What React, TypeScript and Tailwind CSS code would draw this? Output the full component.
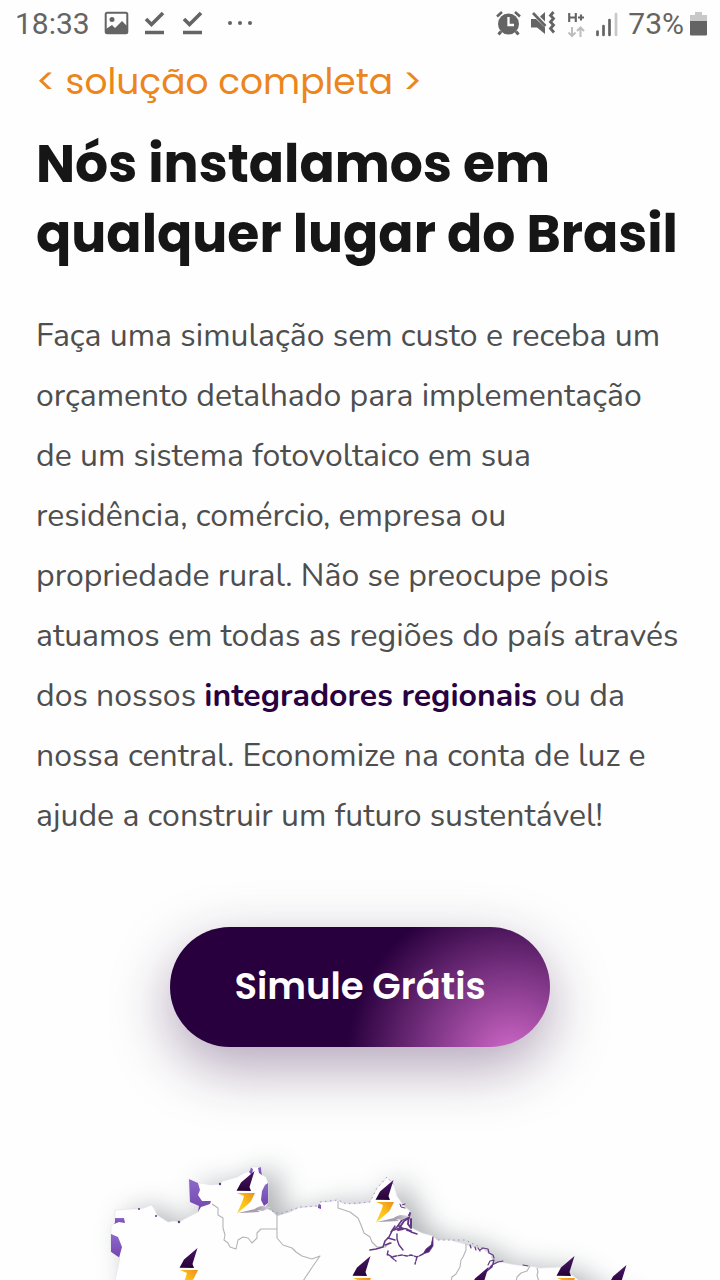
function StatusBar() {
  return (
    <header className='flex h-12 items-center justify-between pr-[13px] pl-[15px] font-["Roboto",sans-serif] text-[30px] leading-none text-[#646464]'>
      <div className="flex items-center">
        <time>18:33</time>
        <svg viewBox="0 0 160 40" className="ml-[11px] h-10 w-40" fill="none" aria-hidden="true">
          <rect x="4.7" y="8.7" width="21.6" height="20.6" rx="1.5" stroke="#646464" strokeWidth="2" />
          <circle cx="11" cy="15.500" r="2.500" fill="#646464" />
          <path d="M5 25l6-4 3 3 7-7 5 5v8H5z" fill="#646464" />
          <path d="M45 15l5.500 5.500L62 9M83 15l5.500 5.500L100 9" stroke="#646464" strokeWidth="3.600" />
          <path d="M44 28.500h19M82 28.500h19" stroke="#646464" strokeWidth="3.600" />
          <circle cx="129" cy="19" r="2" fill="#646464" />
          <circle cx="139" cy="19" r="2" fill="#646464" />
          <circle cx="149" cy="19" r="2" fill="#646464" />
        </svg>
      </div>
      <div className="flex items-center">
        <svg viewBox="0 0 130 40" className="h-10 w-[130px]" fill="none" aria-hidden="true">
          <circle cx="18.500" cy="20" r="10.500" fill="#646464" />
          <path d="M18.500 13v8H24" stroke="#fff" strokeWidth="2.300" />
          <path d="M7 12.500l5-4.500M30 12.500L25 8" stroke="#646464" strokeWidth="2.600" />
          <path d="M11 27.500l-2.500 3M26 27.500l2.500 3" stroke="#646464" strokeWidth="3" />
          <path d="M41 15h5l9 8.500V30l-8-6.500h-6zM50 12.500l5-4.500v9.500z" fill="#646464" />
          <path d="M43 9l12.500 13" stroke="#646464" strokeWidth="2.600" />
          <path d="M63.500 8l-3 3.500 3 3-3 3.500 3 3-3 3.500 3.500 4" stroke="#646464" strokeWidth="2.800" />
          <path d="M79.200 9v9M85.800 9v9M79.200 13.500h6.600M88 13.500h6M91 10.500v6" stroke="#646464" strokeWidth="2.100" />
          <path d="M82 23v9M78.500 28.500l3.500 3.500 3.500-3.500M90.500 33v-9M87 27l3.500-3.500L94 27" stroke="#bdbdbd" strokeWidth="2" />
          <path d="M107.500 27.500V31M113.500 22v9M119.500 16v15" stroke="#646464" strokeWidth="2.700" strokeLinecap="round" />
          <path d="M126 10v21" stroke="#c8c8c8" strokeWidth="2.700" strokeLinecap="round" />
        </svg>
        <span className="ml-2">73%</span>
        <svg viewBox="0 0 17 26" className="ml-1.5 h-[26px] w-[17px]" aria-hidden="true">
          <path d="M5 1h7v3h5v6H0V4h5z" fill="#c8c8c8" />
          <path d="M0 10h17v13.500a1 1 0 01-1 1H1a1 1 0 01-1-1z" fill="#646464" />
        </svg>
      </div>
    </header>
  );
}

const LAND =
  "M108 1310L115 1280L120 1258L111 1252L111 1226L115 1223L115 1210L131 1209L138 1209L144 1208L151 1205L154 1208L157 1215L168 1222L174 1221L179 1222L190 1216L198 1212L199 1206L190 1202L189 1179L200 1183L212 1185L220 1184L223 1181L237 1177L244 1173L250 1171L251 1167L261 1167L262 1175L266 1177L268 1183L268 1203L265 1208L272 1211L277 1216L290 1212L298 1208L307 1207L318 1206L320 1202L329 1202L338 1200L342 1203L356 1204L370 1202L377 1188L383 1182L387 1177L394 1185L397 1196L403 1205L410 1211L412 1228L422 1233L433 1236L437 1240L450 1240L465 1244L473 1247L483 1249L491 1255L493 1264L500 1262L517 1265L530 1266L540 1268L560 1267L572 1275L586 1286L640 1310Z";

const BOLTS = [
  { x: 246, y: 1172, shade: true },
  { x: 385, y: 1181, shade: true },
  { x: 189, y: 1249, shade: false },
  { x: 362, y: 1257, shade: false },
  { x: 566, y: 1257, shade: false },
  { x: 618, y: 1266, shade: false },
  { x: 480, y: 1268, shade: false },
];

function BrazilMap() {
  return (
    <svg viewBox="0 1140 720 140" className="mt-[93px] block w-full" role="img" aria-label="Mapa do Brasil" fill="none">
      <defs>
        <filter id="haze" x="-20%" y="-60%" width="140%" height="220%">
          <feGaussianBlur stdDeviation="14" />
        </filter>
        <linearGradient id="dark" x1="0" y1="0" x2="0" y2="1">
          <stop stopColor="#4a1768" />
          <stop offset="1" stopColor="#260337" />
        </linearGradient>
        <linearGradient id="gold" x1="0" y1="1" x2="1" y2="0">
          <stop stopColor="#ffd51c" />
          <stop offset="0.45" stopColor="#fcc419" />
          <stop offset="1" stopColor="#ee8c1c" />
        </linearGradient>
        <linearGradient id="violet" x1="0" y1="0" x2="0" y2="1">
          <stop stopColor="#8d69ca" />
          <stop offset="1" stopColor="#7345ad" />
        </linearGradient>
        <linearGradient id="shade" x1="0" y1="0" x2="1" y2="0">
          <stop stopColor="#9d90a6" />
          <stop offset="0.6" stopColor="#a9a1b0" />
          <stop offset="1" stopColor="#ddd9df" />
        </linearGradient>
        <clipPath id="land">
          <path d={LAND} />
        </clipPath>
      </defs>
      <path d={LAND} transform="translate(13 3)" fill="#858c90" opacity="0.68" filter="url(#haze)" />
      <path d={LAND} fill="#fefefe" stroke="#e3dfec" strokeWidth="0.6" />
      <g clipPath="url(#land)" fill="url(#violet)">
        <path d="M189 1179l9 4 2 7-2 5 4 6 9 0-1 3-9 3-3 5-1-6-8-4z" />
        <path d="M111 1234l7 3 4 10-3 11-8-6z" />
        <path d="M115 1218h9l1 5-6-1-5 2z" />
        <path d="M268 1183v20l-4 3-3-6 1-9 3-6z" />
        <path d="M250 1167l3 2-1 6-3-3zM261 1167l1 8-3-2-1-5z" />
        <path d="M318 1203l3 2v4l-3-1z" />
      </g>
      <g stroke="#b4b4b4" strokeWidth="1.100" strokeLinejoin="round">
        <path d="M212 1204l6 4v7l5 3v10l2 7-1 5 4 3 2 4 6 2 2-9 5-3 5 1 4 5 5-5v-5l4-4h16" />
        <path d="M277 1215v23l6 7 9 3 4 4 6 4 10 3 8-3-7 10-10 15" />
        <path d="M338 1201v7l12 4 8 6 3 7 3 8 6 4 2 5 5 5h8l5-5" />
        <path d="M466 1244v6l-3 7-2 3-1 7-4 7-4 3-1 4M530 1266l-3 5-6 2-4 4-1 5M537 1268l1 4-1 3 2 7" />
      </g>
      <g stroke="#623783" strokeLinecap="round" strokeLinejoin="round">
        <path d="M409 1217l-7 3-5 7-5 4-3 6-4 4-2 6-7 2-6 1" strokeWidth="1.600" />
        <path d="M394 1230l6-2 7 1 4 3 6 2M397 1234v5l2 6 4 5M388 1238l7 2M385 1245l6-2M391 1232l4-6" strokeWidth="1.400" />
        <path d="M410 1213l-1 5-5 3-4 6M411 1219v9l-3-4 1-9" strokeWidth="2" />
        <path d="M411 1231l-4-1M399 1226l4 3-5 1" strokeWidth="2" />
        <path d="M433 1237v9l-4 6-6 2 3-5 5-4z" fill="#4c2273" strokeWidth="0.8" />
        <path d="M423 1254l-6 3-6-2-4 1-5-1-6 1-4 1-5-3M417 1257l-2 7M391 1257l5 4M388 1251l-1 5" strokeWidth="1.400" strokeDasharray="4 1.500" />
        <path d="M400 1204l1 3 4 1M402 1205l3-1" strokeWidth="1" />
        <path d="M470 1245l1 3M475 1247l1 3M480 1250l3-2 5 1 1 4 4 2 1 3M488 1265l2-4 4-1-2 7-5 4 5-6 6-3 5-1M478 1248l2 3M523 1265l5 1" strokeWidth="1.200" />
      </g>
      <path d="M438 1240h28l5 3 12 5M272 1211l8 3 20-7 18-1M320 1202l18-2 8 4 24-2 7-14 10-11 8 9" stroke="#9578b9" strokeWidth="0.8" strokeDasharray="1.500 3.500" />
      <g fill="#5b3582">
        <circle cx="139" cy="1209" r="1" />
        <circle cx="156" cy="1216" r="1" />
        <circle cx="179" cy="1222" r="1.200" />
        <circle cx="220" cy="1184" r="1.200" />
      </g>
      {BOLTS.map(({ x, y, shade }) => (
        <g key={`${x}-${y}`} transform={`translate(${x} ${y})`}>
          {shade && <path d="M-8 41l17-4 1-1 5-2 10 1-8 4-6-1 3 2z" fill="url(#shade)" />}
          <path d="M8.500-1L-5 10.500-9.500 18.700 5 19 3.500 15z" fill="url(#dark)" />
          <path d="M-9 21H9L4.500 30-9 41.500-3.500 29-2 24z" fill="url(#gold)" />
        </g>
      ))}
    </svg>
  );
}

export default function App() {
  return (
    <div className="min-h-screen overflow-hidden bg-[#fefefe]">
      <StatusBar />
      <main>
        <section className="px-9">
          <p className='pt-2 font-["Poppins","Inter",sans-serif] text-[36px] leading-[52px] text-[#eb851c]'>
            &lt; solução completa &gt;
          </p>
          <h1 className='mt-[21px] font-["Poppins","Inter",sans-serif] text-[52px] leading-[70px] font-bold text-[#161616]'>
            Nós instalamos em
            <br />
            qualquer lugar do Brasil
          </h1>
          <p className='mt-[37px] font-["Nunito","Open_Sans",sans-serif] text-[32px] leading-[60px] text-[#4e4e4e]'>
            Faça uma simulação sem custo e receba um
            <br />
            orçamento detalhado para implementação
            <br />
            de um sistema fotovoltaico em sua
            <br />
            residência, comércio, empresa ou
            <br />
            propriedade rural. Não se preocupe pois
            <br />
            atuamos em todas as regiões do país através
            <br />
            dos nossos{" "}
            <a href="#integradores" className="font-bold text-[#2a0140]">
              integradores regionais
            </a>{" "}
            ou da
            <br />
            nossa central. Economize na conta de luz e
            <br />
            ajude a construir um futuro sustentável!
          </p>
          <div className="mt-[81px] flex justify-center">
            <button
              type="button"
              className='h-[120px] w-[380px] rounded-full bg-[#29003e] bg-[radial-gradient(circle_at_90%_110%,#d46bcd_0%,#29003e_165px)] font-["Poppins","Inter",sans-serif] text-[37px] font-semibold text-white shadow-[0_20px_60px_rgba(41,0,62,0.36)]'
            >
              Simule Grátis
            </button>
          </div>
        </section>
        <BrazilMap />
      </main>
    </div>
  );
}
